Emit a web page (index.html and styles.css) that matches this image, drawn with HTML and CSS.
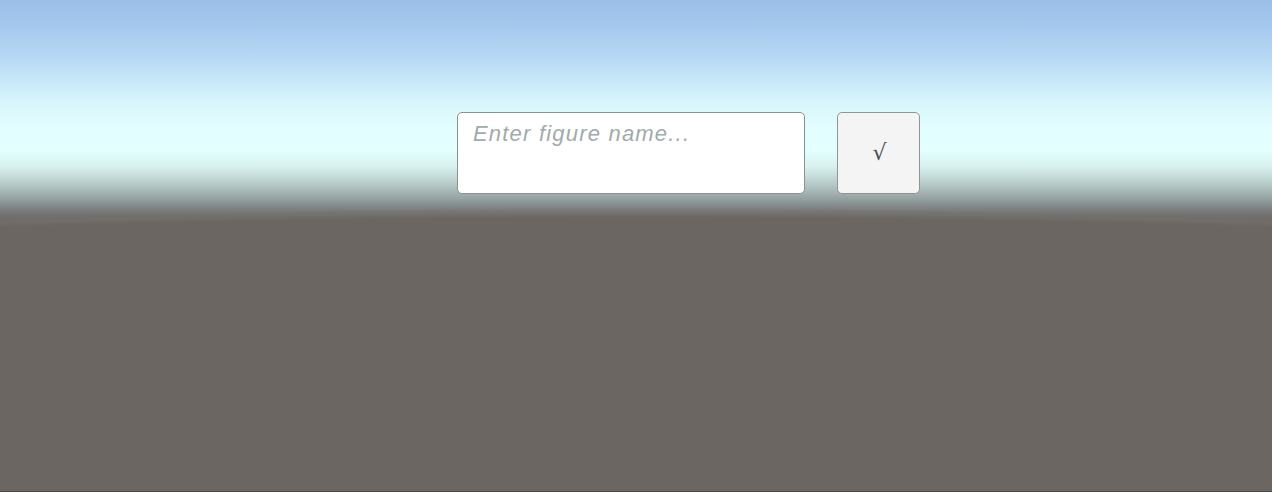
FILE: index.html
```html
<!DOCTYPE html>
<html>
<head>
<meta charset="utf-8">
<link rel="stylesheet" href="styles.css">
</head>
<body>
<div class="scene">
  <div class="bar">
    <div class="field"><span class="placeholder">Enter figure name...</span></div>
    <button class="ok">√</button>
  </div>
</div>
</body>
</html>
```
FILE: styles.css
```css
html, body {
  margin: 0;
  padding: 0;
  width: 1272px;
  height: 492px;
  overflow: hidden;
}
.scene {
  width: 1272px;
  height: 492px;
  box-sizing: border-box;
  border-bottom: 1px solid #4f4b48;
  background:
    radial-gradient(3748px 690px at 636px 900px,
      #6c6662 98.9%,
      rgba(114, 113, 111, 0.6) 99.6%,
      rgba(120, 125, 125, 0) 100.3%),
    linear-gradient(to bottom,
      #9abee6 0px,
      #a8cbef 32px,
      #b9daf5 60px,
      #cbeaf9 84px,
      #d9f6fb 104px,
      #e1fdfd 125px,
      #e3fffe 150px,
      #d9f2ef 166px,
      #c3d9d6 178px,
      #a9bbb9 190px,
      #919e9d 200px,
      #7e8382 208px,
      #726f6c 216px,
      #6b6561 224px,
      #6a6560 300px,
      #6b645f 420px,
      #69635e 491px);
  font-family: "Liberation Sans", Arial, sans-serif;
}
.bar {
  display: flex;
  gap: 32px;
  padding: 112px 0 0 457px;
}
.field {
  width: 348px;
  height: 82px;
  box-sizing: border-box;
  background: #ffffff;
  border: 1.5px solid #8b9192;
  border-radius: 5px;
  padding: 8px 15px;
}
.placeholder {
  font-style: italic;
  font-size: 22px;
  letter-spacing: 1.2px;
  color: #a0abab;
}
.ok {
  width: 83px;
  height: 82px;
  box-sizing: border-box;
  background: #f4f4f4;
  border: 1.5px solid #8f9495;
  border-radius: 5px;
  padding: 0 0 0 2px;
  font-family: "DejaVu Sans", sans-serif;
  font-size: 22px;
  line-height: 1;
  color: #4a4f50;
}
```
